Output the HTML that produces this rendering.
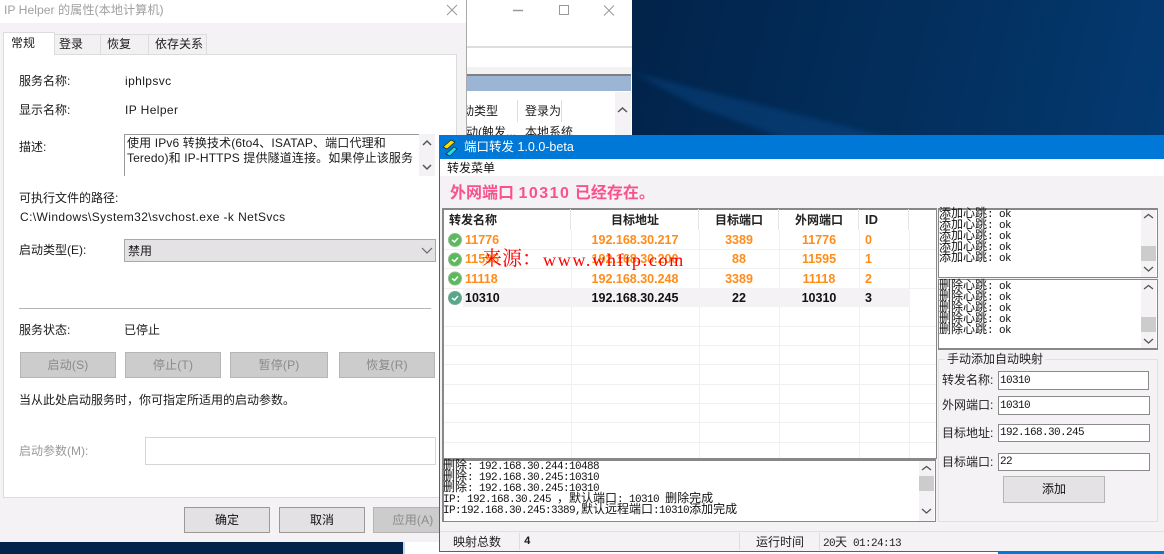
<!DOCTYPE html>
<html><head><meta charset="utf-8"><style>
*{box-sizing:border-box;margin:0;padding:0}
html,body{width:1164px;height:554px;overflow:hidden}
body{position:relative;background:#03284f;font:12px/16px "Liberation Sans","Noto Sans CJK SC",sans-serif;color:#1a1a1a}
.a{position:absolute;white-space:nowrap}
.btn{position:absolute;background:#ccc;border:1px solid #b5b5b5;color:#8a8a8a;text-align:center;line-height:24px;height:26px;letter-spacing:.2px}
.btn2{position:absolute;background:#e3e1e4;border:1px solid #a5a5a5;text-align:center;line-height:24px;height:26px;color:#111}
.m{font-family:"WenQuanYi Zen Hei","Noto Sans CJK SC",sans-serif;font-size:12px;line-height:11px;color:#111;overflow:visible}
.m div{height:11px;line-height:11px;white-space:pre}
.m u,.u{text-decoration:none;font-family:"Liberation Mono",monospace;font-size:11px;letter-spacing:-.6px}
.box{position:absolute;background:#fff;border:1px solid #888}
.inp{position:absolute;background:#fff;border:1px solid #8a8a8a;font-size:11px;letter-spacing:-.6px;line-height:18px;padding-left:1px;font-family:"Liberation Mono",monospace;color:#111}
.sb{position:absolute;width:15px;background:#f5f2f6;color:#555}
.th{position:absolute;top:212px;font-weight:bold;font-size:12px;text-align:center;color:#222}
.c{position:absolute;font-weight:bold;text-align:center;color:#ff8c1a;font-family:"Liberation Sans",sans-serif;font-size:12.5px;line-height:16px}
.k{color:#111}
.hl{position:absolute;left:444px;width:492px;height:1px;background:#f0f0f0}
.vl{position:absolute;top:230px;height:228px;width:1px;background:#f0f0f0}
.ls{letter-spacing:.4px}
</style></head><body>
<svg class="a" style="left:0;top:0" width="1164" height="554"><defs><linearGradient id="g" gradientUnits="userSpaceOnUse" x1="632" y1="0" x2="1164" y2="135"><stop offset="0" stop-color="#02234a"/><stop offset=".6" stop-color="#03305f"/><stop offset="1" stop-color="#043a72"/></linearGradient><filter id="b"><feGaussianBlur stdDeviation="3"/></filter></defs><rect width="1164" height="554" fill="url(#g)"/><path d="M632 72L760 105L900 140L790 140L700 108Z" fill="#0a5aa5" opacity=".3" filter="url(#b)"/></svg>

<!-- lower strip behind -->
<div class="a" style="left:403px;top:542px;width:2px;height:12px;background:#cdd8e4"></div>
<div class="a" style="left:405px;top:542px;width:34px;height:12px;background:#fff"></div>

<!-- back window -->
<div class="a" style="left:460px;top:0;width:172px;height:140px;background:#fff">
<div class="a" style="left:0;top:46px;width:172px;height:2px;background:#ddd"></div>
<div class="a" style="left:0;top:67px;width:172px;height:7px;background:#f2f2f2"></div>
<div class="a" style="left:0;top:74px;width:171px;height:2px;background:#808080"></div>
<div class="a" style="left:0;top:76px;width:171px;height:15px;background:#9db5d4"></div>
<div class="a" style="left:6px;top:103px;width:32px;overflow:hidden;direction:rtl">动类型</div>
<div class="a" style="left:65px;top:103px">登录为</div>
<div class="a" style="left:57px;top:100px;width:1px;height:22px;background:#ddd"></div>
<div class="a" style="left:101px;top:100px;width:1px;height:22px;background:#ddd"></div>
<div class="a" style="left:6px;top:124px">动(触发...</div>
<div class="a" style="left:65px;top:124px">本地系统</div>
<div class="a" style="left:155px;top:92px;width:16px;height:48px;background:#f5f2f6"></div>
<svg class="a" style="left:157px;top:106px" width="11" height="7"><path d="M1 6L5.5 2L10 6" fill="none" stroke="#555" stroke-width="1.5"/></svg>
<svg class="a" style="left:53px;top:4px" width="104" height="16" fill="none" stroke="#999"><path d="M0 6.500H10" stroke-width="1.500"/><rect x="46.500" y="1.500" width="9" height="9"/><path d="M91 1.500L101 11.500M101 1.500L91 11.500"/></svg>
</div>

<!-- service dialog -->
<div class="a" style="left:0;top:0;width:467px;height:542px;background:#f5f2f6;border-right:1px solid #aaa">
<div class="a" style="left:0;top:0;width:466px;height:23px;background:#fff"></div>
<div class="a" style="left:4px;top:2px;color:#a0a0a0;font-size:12.200px">IP Helper 的属性(本地计算机)</div>
<svg class="a" style="left:446px;top:4px" width="12" height="12"><path d="M1 1L11 11M11 1L1 11" stroke="#999" fill="none"/></svg>
<div class="a" style="left:3px;top:54px;width:454px;height:444px;background:#fff;border:1px solid #dcdcdc"></div>
<div class="a" style="left:3px;top:32px;width:52px;height:23px;background:#fff;border:1px solid #dcdcdc;border-bottom:0;padding:2px 0 0 7px">常规</div>
<div class="a" style="left:55px;top:34px;width:46px;height:21px;background:#f3f0f4;border:1px solid #dcdcdc;border-left:0;padding:1px 0 0 4px">登录</div>
<div class="a" style="left:101px;top:34px;width:48px;height:21px;background:#f3f0f4;border:1px solid #dcdcdc;border-left:0;padding:1px 0 0 6px">恢复</div>
<div class="a" style="left:149px;top:34px;width:58px;height:21px;background:#f3f0f4;border:1px solid #dcdcdc;border-left:0;padding:1px 0 0 6px">依存关系</div>

<div class="a" style="left:19px;top:73px">服务名称:</div>
<div class="a ls" style="left:125px;top:73px">iphlpsvc</div>
<div class="a" style="left:19px;top:102px">显示名称:</div>
<div class="a ls" style="left:125px;top:102px">IP Helper</div>
<div class="a" style="left:19px;top:139px">描述:</div>
<div class="a" style="left:124px;top:134px;width:311px;height:42px;background:#fff;border:1px solid #999;border-width:1px 0 0 1px"></div>
<div class="a" style="left:127px;top:135px;letter-spacing:.13px">使用 IPv6 转换技术(6to4、ISATAP、端口代理和</div>
<div class="a" style="left:127px;top:150px;letter-spacing:.13px">Teredo)和 IP-HTTPS 提供隧道连接。如果停止该服务</div>
<div class="a" style="left:419px;top:134px;width:16px;height:42px;background:#f5f2f6"></div>
<svg class="a" style="left:421px;top:139px" width="12" height="33" fill="none" stroke="#555" stroke-width="1.500"><path d="M2 6L6 2L10 6M2 26L6 30L10 26"/></svg>
<div class="a" style="left:19px;top:190px">可执行文件的路径:</div>
<div class="a ls" style="left:20px;top:209px">C:\Windows\System32\svchost.exe -k NetSvcs</div>
<div class="a" style="left:19px;top:242px">启动类型(E):</div>
<div class="a" style="left:124px;top:239px;width:312px;height:23px;background:#e4e2e5;border:1px solid #a8a8a8;padding:3px 0 0 3px">禁用</div>
<svg class="a" style="left:421px;top:247px" width="12" height="8"><path d="M1 1L6 6L11 1" fill="none" stroke="#666" stroke-width="1.200"/></svg>
<div class="a" style="left:19px;top:308px;width:412px;height:1px;background:#b5b5b5"></div>
<div class="a" style="left:19px;top:322px">服务状态:</div>
<div class="a" style="left:124px;top:322px">已停止</div>
<div class="btn" style="left:20px;top:352px;width:96px">启动(S)</div>
<div class="btn" style="left:125px;top:352px;width:96px">停止(T)</div>
<div class="btn" style="left:230px;top:352px;width:98px">暂停(P)</div>
<div class="btn" style="left:339px;top:352px;width:96px">恢复(R)</div>
<div class="a" style="left:19px;top:392px">当从此处启动服务时，你可指定所适用的启动参数。</div>
<div class="a" style="left:19px;top:443px;color:#999">启动参数(M):</div>
<div class="a" style="left:145px;top:437px;width:291px;height:28px;background:#fff;border:1px solid #d5d5d5"></div>
<div class="btn2" style="left:184px;top:507px;width:86px;border-color:#999">确定</div>
<div class="btn2" style="left:279px;top:507px;width:86px;border-color:#999">取消</div>
<div class="btn" style="left:373px;top:507px;width:80px">应用(A)</div>
</div>

<!-- bottom strip under port window -->
<div class="a" style="left:439px;top:550px;width:559px;height:4px;background:#fff"></div>
<div class="a" style="left:998px;top:550px;width:166px;height:4px;background:#0078d7"></div>

<!-- port window -->
<div class="a" style="left:439px;top:135px;width:725px;height:417px;background:#f5f2f6;border-left:1px solid #0078d7;border-bottom:1px solid #0078d7">
<div class="a" style="left:0;top:0;width:725px;height:24px;background:#0078d7"></div>
<svg class="a" style="left:2px;top:4px" width="16" height="18"><path d="M1 8L9 1L13 3L5 10Z" fill="#f5e000" stroke="#222" stroke-width=".7"/><path d="M4 15L12 8L15 10L8 17Z" fill="#18e0e8" stroke="#222" stroke-width=".7"/></svg>
<div class="a" style="left:24px;top:4px;color:#fff;font-size:12.500px">端口转发 1.0.0-beta</div>
<div class="a" style="left:0;top:24px;width:725px;height:17px;background:#fff;padding:1px 0 0 7px;color:#111">转发菜单</div>
<div class="a" style="left:10px;top:48px;font-size:16px;line-height:22px;font-weight:bold;color:#f8528a">外网端口 <span style="letter-spacing:1.500px">10310</span> 已经存在。</div>
</div>

<!-- list -->
<div class="a" style="left:442px;top:208px;width:495px;height:251px;background:#fff;border:1px solid #888;border-width:2px 1px 1px 2px"></div>
<div class="hl" style="top:249px"></div><div class="hl" style="top:268px"></div><div class="hl" style="top:288px"></div><div class="hl" style="top:326px"></div><div class="hl" style="top:345px"></div><div class="hl" style="top:364px"></div><div class="hl" style="top:384px"></div><div class="hl" style="top:403px"></div><div class="hl" style="top:422px"></div><div class="hl" style="top:442px"></div>
<div class="vl" style="left:571px"></div><div class="vl" style="left:699px"></div><div class="vl" style="left:779px"></div><div class="vl" style="left:859px"></div><div class="vl" style="left:909px"></div>
<div class="a" style="left:570px;top:209px;width:1px;height:21px;background:#e5e5e5"></div><div class="a" style="left:698px;top:209px;width:1px;height:21px;background:#e5e5e5"></div><div class="a" style="left:778px;top:209px;width:1px;height:21px;background:#e5e5e5"></div><div class="a" style="left:858px;top:209px;width:1px;height:21px;background:#e5e5e5"></div><div class="a" style="left:908px;top:209px;width:1px;height:21px;background:#e5e5e5"></div>
<div class="th" style="left:449px">转发名称</div><div class="th" style="left:571px;width:128px">目标地址</div><div class="th" style="left:699px;width:80px">目标端口</div><div class="th" style="left:779px;width:80px">外网端口</div><div class="th" style="left:865px;font-size:13px">ID</div>
<div class="a" style="left:463px;top:288px;width:447px;height:19px;background:#f5f2f6"></div>

<svg class="a" style="left:447px;top:232px" width="16" height="80"><g fill="#5cb85c" stroke="#8cbf8c"><circle cx="8" cy="8" r="6.500"/><circle cx="8" cy="27.500" r="6.500"/><circle cx="8" cy="46.500" r="6.500"/><circle cx="8" cy="66" r="6.500" fill="#55a88a" stroke="#7aa898"/></g><g fill="none" stroke="#fff" stroke-width="1.500"><path d="M5 8L7.500 10L11 6M5 27.500L7.500 29.500L11 25.500M5 46.500L7.500 48.500L11 44.500M5 66L7.500 68L11 64"/></g></svg>

<div class="c" style="left:465px;top:232px">11776</div><div class="c" style="left:571px;top:232px;width:128px">192.168.30.217</div><div class="c" style="left:699px;top:232px;width:80px">3389</div><div class="c" style="left:779px;top:232px;width:80px">11776</div><div class="c" style="left:865px;top:232px">0</div>
<div class="c" style="left:465px;top:251px">11595</div><div class="c" style="left:571px;top:251px;width:128px">192.168.30.200</div><div class="c" style="left:699px;top:251px;width:80px">88</div><div class="c" style="left:779px;top:251px;width:80px">11595</div><div class="c" style="left:865px;top:251px">1</div>
<div class="c" style="left:465px;top:271px">11118</div><div class="c" style="left:571px;top:271px;width:128px">192.168.30.248</div><div class="c" style="left:699px;top:271px;width:80px">3389</div><div class="c" style="left:779px;top:271px;width:80px">11118</div><div class="c" style="left:865px;top:271px">2</div>
<div class="c k" style="left:465px;top:290px">10310</div><div class="c k" style="left:571px;top:290px;width:128px">192.168.30.245</div><div class="c k" style="left:699px;top:290px;width:80px">22</div><div class="c k" style="left:779px;top:290px;width:80px">10310</div><div class="c k" style="left:865px;top:290px">3</div>

<div class="a" style="left:482px;top:247px;color:#f00;font:20px/24px 'Liberation Serif','Noto Serif CJK SC',serif">来源：</div>
<div class="a" style="left:543px;top:248px;color:#f00;font:18px/24px 'Liberation Serif',serif;letter-spacing:1.700px">www.whftp.com</div>

<!-- log -->
<div class="box" style="left:442px;top:459px;width:494px;height:63px;border-width:2px 1px 1px 2px"></div>
<div class="a m" style="left:443px;top:459px"><div>删除<u>: 192.168.30.244:10488</u></div><div>删除<u>: 192.168.30.245:10310</u></div><div>删除<u>: 192.168.30.245:10310</u></div><div><u>IP: 192.168.30.245 </u>，默认端口<u>: 10310 </u>删除完成</div><div><u>IP:192.168.30.245:3389,</u>默认远程端口<u>:10310</u>添加完成</div></div>
<div class="sb" style="left:919px;top:461px;height:60px"></div>
<div class="a" style="left:919px;top:476px;width:15px;height:15px;background:#ccc"></div>
<svg class="a" style="left:921px;top:465px" width="11" height="54" fill="none" stroke="#555" stroke-width="1.300"><path d="M1 5L5.500 1.500L10 5M1 44L5.500 48L10 44"/></svg>

<!-- side logs -->
<div class="box" style="left:938px;top:208px;width:220px;height:70px;border-width:2px 1px 1px 1px"></div>
<div class="a m" style="left:939px;top:207px"><div>添加心跳<u>: ok</u></div><div>添加心跳<u>: ok</u></div><div>添加心跳<u>: ok</u></div><div>添加心跳<u>: ok</u></div><div>添加心跳<u>: ok</u></div></div>
<div class="sb" style="left:1141px;top:210px;height:67px"></div>
<div class="a" style="left:1141px;top:246px;width:15px;height:15px;background:#ccc"></div>
<svg class="a" style="left:1143px;top:212px" width="11" height="62" fill="none" stroke="#555" stroke-width="1.300"><path d="M1 6L5.500 2.500L10 6M1 55L5.500 59L10 55"/></svg>
<div class="box" style="left:938px;top:279px;width:220px;height:71px;border-width:1px 1px 2px 1px"></div>
<div class="a m" style="left:939px;top:279px"><div>删除心跳<u>: ok</u></div><div>删除心跳<u>: ok</u></div><div>删除心跳<u>: ok</u></div><div>删除心跳<u>: ok</u></div><div>删除心跳<u>: ok</u></div></div>
<div class="sb" style="left:1141px;top:280px;height:68px"></div>
<div class="a" style="left:1141px;top:317px;width:15px;height:15px;background:#ccc"></div>
<svg class="a" style="left:1143px;top:283px" width="11" height="62" fill="none" stroke="#555" stroke-width="1.300"><path d="M1 6L5.500 2.500L10 6M1 56L5.500 60L10 56"/></svg>

<!-- form -->
<div class="a" style="left:938px;top:359px;width:220px;height:163px;border:1px solid #e2e0e3"></div>
<div class="a" style="left:945px;top:351px;background:#f5f2f6;padding:0 2px;color:#222">手动添加自动映射</div>
<div class="a" style="left:942px;top:372px;color:#222">转发名称:</div><div class="inp" style="left:998px;top:371px;width:151px;height:19px">10310</div>
<div class="a" style="left:942px;top:397px;color:#222">外网端口:</div><div class="inp" style="left:998px;top:396px;width:152px;height:19px">10310</div>
<div class="a" style="left:942px;top:425px;color:#222">目标地址:</div><div class="inp" style="left:998px;top:424px;width:152px;height:18px;line-height:17px">192.168.30.245</div>
<div class="a" style="left:942px;top:454px;color:#222">目标端口:</div><div class="inp" style="left:998px;top:453px;width:152px;height:18px;line-height:17px">22</div>
<div class="btn2" style="left:1003px;top:476px;width:102px;height:27px;line-height:25px;background:#e4e2e5;border-color:#b5b5b5">添加</div>

<!-- status -->
<div class="a" style="left:440px;top:531px;width:724px;height:1px;background:#e0e0e0"></div>
<div class="a" style="left:453px;top:534px;color:#222">映射总数</div>
<div class="a" style="left:519px;top:533px;width:1px;height:17px;background:#ddd"></div>
<div class="a u" style="left:524px;top:534px;font-weight:bold">4</div>
<div class="a" style="left:739px;top:533px;width:1px;height:17px;background:#ddd"></div>
<div class="a" style="left:756px;top:534px;color:#222">运行时间</div>
<div class="a" style="left:819px;top:533px;width:1px;height:17px;background:#ddd"></div>
<div class="a" style="left:823px;top:534px;color:#222"><span class="u">20</span>天<span class="u"> 01:24:13</span></div>
</body></html>
